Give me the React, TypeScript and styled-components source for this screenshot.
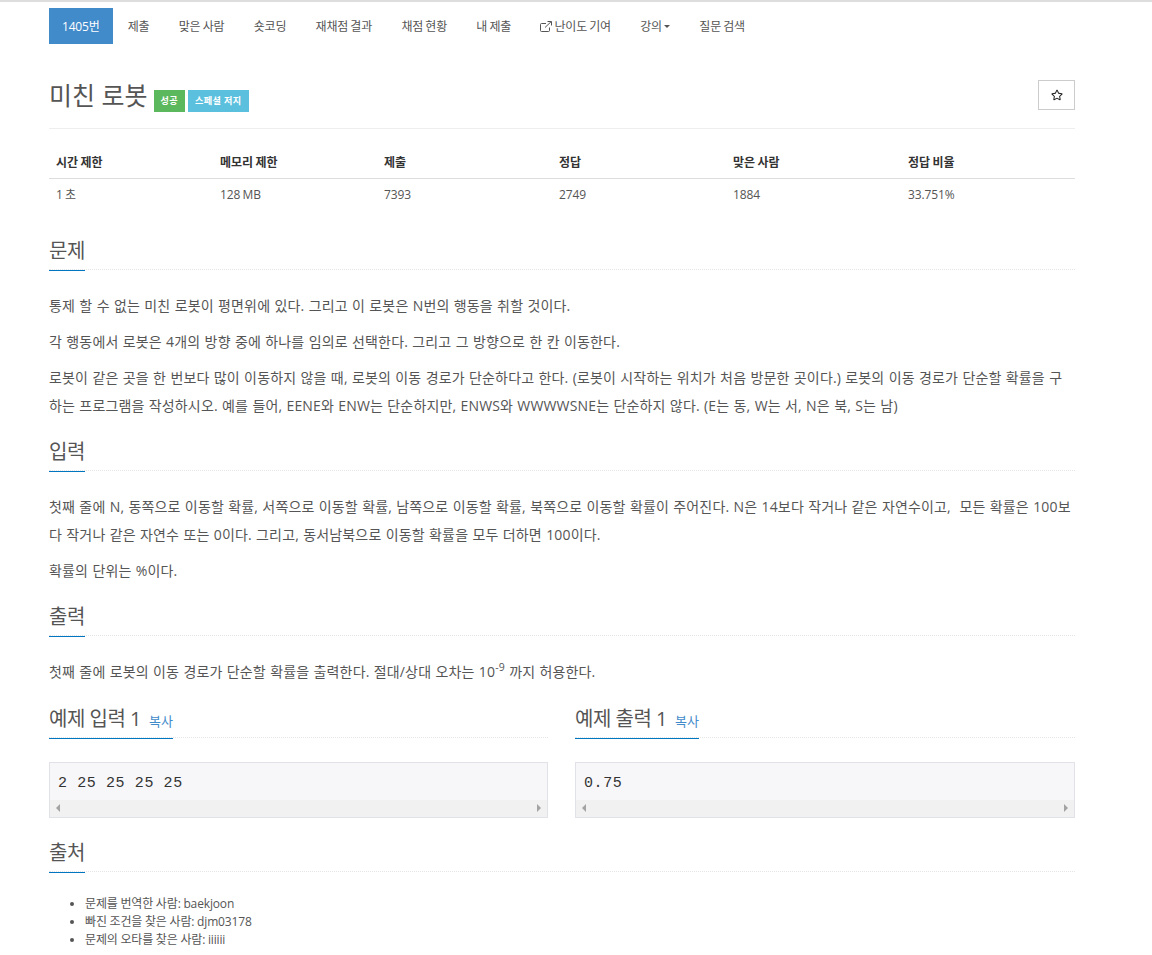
import React from "react";
import styled, { createGlobalStyle } from "styled-components";
import { FaRegStar } from "react-icons/fa";

const Global = createGlobalStyle`
  html, body { margin: 0; padding: 0; background: #fff; }
  body { font-family: "Open Sans", "Noto Sans CJK KR", sans-serif; font-size: 14px; color: #555; }
`;
const TopLine = styled.div`height: 2px; background: #ddd;`;
const Page = styled.div`width: 1026px; margin-left: 49px; height: 953px;`;
const Nav = styled.ul`display: flex; list-style: none; margin: 6px 0 0; padding: 0; height: 36px; letter-spacing: -0.2px; word-spacing: -0.7px;`;
const NavItem = styled.li<{ $active?: boolean }>`
  display: flex; align-items: center; gap: 2px; height: 36px; box-sizing: border-box;
  padding: 0 ${p => (p.$active ? "13px" : "14.7px")};
  width: ${p => (p.$active ? "64px" : "auto")};
  font-size: 12px; white-space: nowrap; color: ${p => (p.$active ? "#fff" : "#555")};
  background: ${p => (p.$active ? "#428bca" : "transparent")};
`;
const Caret = styled.span`width: 0; height: 0; border-left: 3.5px solid transparent; border-right: 3.5px solid transparent; border-top: 3.5px solid #555;`;
const PageHeader = styled.div`display: flex; align-items: flex-start; height: 85px; box-sizing: border-box; border-bottom: 1px solid #eee;`;
const Title = styled.h1`margin: 31px 0 0; font-size: 25px; font-weight: 400; color: #555; line-height: 40px;`;
const Labels = styled.div`display: flex; gap: 3px; margin: 46px 0 0 6px;`;
const Label = styled.span<{ $bg: string }>`
  display: block; height: 22px; line-height: 22px; padding: 0 7px; font-size: 9.1px; font-weight: 700; letter-spacing: 0.4px; color: #fff; background: ${p => p.$bg};
`;
const StarButton = styled.button`
  margin: 36px 0 0 auto; width: 37px; height: 30px; border: 1px solid #ccc; background: #fff; display: flex; align-items: center; justify-content: center; padding: 0; color: #222; font-size: 12px;
`;
const Stats = styled.table`width: 100%; table-layout: fixed; border-collapse: collapse; margin-top: 16px; font-size: 12px; word-spacing: -0.7px;`;
const Th = styled.th<{ $w: number }>`width: ${p => p.$w}px; box-sizing: border-box; text-align: left; padding: 2px 7px 0; height: 33px; font-weight: 700; color: #333; border-bottom: 1px solid #ddd;`;
const Td = styled.td`padding: 0 7px; height: 31px; color: #555; letter-spacing: -0.1px;`;
const Section = styled.section<{ $mt: number }>`margin-top: ${p => p.$mt}px;`;
const Headline = styled.div`height: 30px; border-bottom: 1px dotted #e5e5e5;`;
const HeadTitle = styled.h2`
  display: flex; width: fit-content; align-items: baseline; gap: 8px; margin: 0; height: 31px; line-height: 23px; font-size: 20px; font-weight: 400; letter-spacing: -0.5px; color: #555; border-bottom: 1px solid #0076c0;
`;
const Copy = styled.a`font-size: 13px; letter-spacing: 0; color: #428bca;`;
const Para = styled.p`margin: 0 0 8px; line-height: 28px; font-size: 14px; letter-spacing: 0.15px; word-spacing: 0.5px;`;
const Body = styled.div`margin-top: 22px;`;
const Samples = styled.div`display: grid; grid-template-columns: 499px 500px; gap: 27px; margin-top: 21px;`;
const PreBox = styled.div`margin-top: 24px; height: 56px; border: 1px solid #e1e1e8; background: #f7f7f9; box-sizing: border-box; display: flex; flex-direction: column;`;
const Pre = styled.pre`margin: 0; flex: 1; min-height: 0; padding: 0 8px; line-height: 41px; font-family: "Liberation Mono", monospace; font-size: 15px; letter-spacing: 0.6px; color: #333;`;
const ScrollBar = styled.div`height: 17px; flex-shrink: 0; background: #f1f1f1; display: flex; justify-content: space-between; align-items: center; padding: 0 6px;`;
const Arrow = styled.span<{ $dir: "l" | "r" }>`
  width: 0; height: 0; border-top: 4px solid transparent; border-bottom: 4px solid transparent;
  ${p => (p.$dir === "l" ? "border-right: 4px solid #a3a3a3;" : "border-left: 4px solid #a3a3a3;")}
`;
const Credits = styled.ul`margin: 23px 0 0; padding-left: 36px; font-size: 12px; line-height: 18px; letter-spacing: -0.15px; word-spacing: -0.2px;`;
const Sup = styled.sup`font-size: 10.5px; line-height: 0;`;

const ExtIcon = () => (
  <svg width="12" height="11" viewBox="0 0 12 11" fill="none" stroke="#555" strokeWidth="1">
    <path d="M9.5 6.5V9.5a1 1 0 0 1-1 1H1.5a1 1 0 0 1-1-1V3.5a1 1 0 0 1 1-1H6" />
    <path d="M5 6.5L11 .8M7.5 .5h4V4.5" />
  </svg>
);

const navs = ["제출", "맞은 사람", "숏코딩", "재채점 결과", "채점 현황", "내 제출"];
const heads = [["시간 제한", 164], ["메모리 제한", 164], ["제출", 175], ["정답", 174], ["맞은 사람", 175], ["정답 비율", 174]] as const;
const vals = ["1 초", "128 MB", "7393", "2749", "1884", "33.751%"];

const Sample = ({ title, value }: { title: string; value: string }) => (
  <div>
    <Headline>
      <HeadTitle>{title} <Copy>복사</Copy></HeadTitle>
    </Headline>
    <PreBox>
      <Pre>{value}</Pre>
      <ScrollBar><Arrow $dir="l" /><Arrow $dir="r" /></ScrollBar>
    </PreBox>
  </div>
);

export default function App() {
  return (
    <>
      <Global />
      <TopLine />
      <Page>
        <Nav>
          <NavItem $active>1405번</NavItem>
          {navs.map(n => <NavItem key={n}>{n}</NavItem>)}
          <NavItem><ExtIcon />난이도 기여</NavItem>
          <NavItem>강의<Caret /></NavItem>
          <NavItem>질문 검색</NavItem>
        </Nav>
        <PageHeader>
          <Title>미친 로봇</Title>
          <Labels>
            <Label $bg="#5cb85c">성공</Label>
            <Label $bg="#5bc0de">스페셜 저지</Label>
          </Labels>
          <StarButton aria-label="star"><FaRegStar /></StarButton>
        </PageHeader>
        <Stats>
          <thead><tr>{heads.map(([h, w]) => <Th key={h} $w={w}>{h}</Th>)}</tr></thead>
          <tbody><tr>{vals.map(v => <Td key={v}>{v}</Td>)}</tr></tbody>
        </Stats>
        <Section $mt={29}>
          <Headline><HeadTitle>문제</HeadTitle></Headline>
          <Body>
            <Para>통제 할 수 없는 미친 로봇이 평면위에 있다. 그리고 이 로봇은 N번의 행동을 취할 것이다.</Para>
            <Para>각 행동에서 로봇은 4개의 방향 중에 하나를 임의로 선택한다. 그리고 그 방향으로 한 칸 이동한다.</Para>
            <Para>로봇이 같은 곳을 한 번보다 많이 이동하지 않을 때, 로봇의 이동 경로가 단순하다고 한다. (로봇이 시작하는 위치가 처음 방문한 곳이다.) 로봇의 이동 경로가 단순할 확률을 구하는 프로그램을 작성하시오. 예를 들어, EENE와 ENW는 단순하지만, ENWS와 WWWWSNE는 단순하지 않다. (E는 동, W는 서, N은 북, S는 남)</Para>
          </Body>
        </Section>
        <Section $mt={20}>
          <Headline><HeadTitle>입력</HeadTitle></Headline>
          <Body>
            <Para>첫째 줄에 N, 동쪽으로 이동할 확률, 서쪽으로 이동할 확률, 남쪽으로 이동할 확률, 북쪽으로 이동할 확률이 주어진다. N은 14보다 작거나 같은 자연수이고,{"\u00a0 "}모든 확률은 100보다 작거나 같은 자연수 또는 0이다. 그리고, 동서남북으로 이동할 확률을 모두 더하면 100이다.</Para>
            <Para>확률의 단위는 %이다.</Para>
          </Body>
        </Section>
        <Section $mt={20}>
          <Headline><HeadTitle>출력</HeadTitle></Headline>
          <Body>
            <Para>첫째 줄에 로봇의 이동 경로가 단순할 확률을 출력한다. 절대/상대 오차는 10<Sup>-9</Sup> 까지 허용한다.</Para>
          </Body>
        </Section>
        <Samples>
          <Sample title="예제 입력 1" value="2 25 25 25 25" />
          <Sample title="예제 출력 1" value="0.75" />
        </Samples>
        <Section $mt={23}>
          <Headline><HeadTitle>출처</HeadTitle></Headline>
          <Credits>
            <li>문제를 번역한 사람: baekjoon</li>
            <li>빠진 조건을 찾은 사람: djm03178</li>
            <li>문제의 오타를 찾은 사람: iiiiii</li>
          </Credits>
        </Section>
      </Page>
    </>
  );
}
